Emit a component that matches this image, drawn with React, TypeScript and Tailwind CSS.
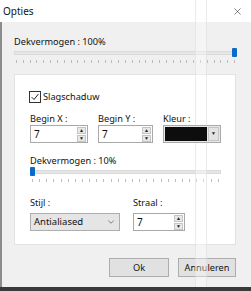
import { ChevronDown, X } from "lucide-react";

const font = { fontFamily: '"Noto Sans", "Open Sans", sans-serif' };

function Ticks({ count }: { count: number }) {
  return (
    <div className="flex justify-between px-[2px] mt-[3px]">
      {Array.from({ length: count }).map((_, i) => (
        <div key={i} className="w-px h-[3px] bg-[#bcbcbc]" />
      ))}
    </div>
  );
}

function Slider({ pos, ticks }: { pos: "start" | "end"; ticks: number }) {
  return (
    <div>
      <div className="relative h-[9px] flex items-center">
        <div className="w-full h-[4px] bg-[#e6e6e6] border border-[#dadada]" />
        <div
          className={`absolute top-0 h-[9px] w-[5px] rounded-[1px] bg-[#0a6cc9] ${
            pos === "end" ? "right-0" : "left-0"
          }`}
        />
      </div>
      <Ticks count={ticks} />
    </div>
  );
}

function Spinner() {
  return (
    <div className="flex flex-col gap-px pr-px py-px">
      <div className="w-[9px] h-[7px] bg-[#e8e8e8] border border-[#c4c4c4] flex items-center justify-center text-[5px] leading-none text-[#222]">
        ▲
      </div>
      <div className="w-[9px] h-[7px] bg-[#e8e8e8] border border-[#c4c4c4] flex items-center justify-center text-[5px] leading-none text-[#222]">
        ▼
      </div>
    </div>
  );
}

function SpinInput({ w }: { w: string }) {
  return (
    <div className={`${w} h-[18px] bg-white border border-[#a9a9a9] flex items-center justify-between`}>
      <span className="pl-[3px] text-[10px] leading-none">7</span>
      <Spinner />
    </div>
  );
}

export default function App() {
  return (
    <div
      className="relative w-[251px] h-[291px] bg-[#f0f0f0] flex flex-col text-[#111] overflow-hidden text-[9.2px]"
      style={font}
    >
      {/* Title bar */}
      <div className="h-[22px] bg-white flex items-center justify-between pl-[3px] pr-[8px] shrink-0">
        <span className="text-[10px] leading-none">Opties</span>
        <X className="w-[11px] h-[11px] text-[#333]" strokeWidth={1.3} />
      </div>

      <div className="flex-1 flex flex-col border-l-2 border-[#8c8c8c] pl-[12px] pr-[15px] pt-[14px]">
        <div className="leading-[12px]">Dekvermogen : 100%</div>
        <div className="-mr-px">
          <Slider pos="end" ticks={33} />
        </div>

        {/* Group panel */}
        <div className="mt-[11px] h-[171px] bg-white border border-[#e2e2e2] px-[15px] pt-[16px]">
          <div className="flex items-center gap-[2px] h-[12px]">
            <div className="w-[12px] h-[12px] border border-[#333] flex items-center justify-center -ml-px">
              <svg viewBox="0 0 12 12" className="w-[10px] h-[10px]">
                <path d="M2 6.2 L4.8 9 L10 2.6" fill="none" stroke="#222" strokeWidth="1.2" />
              </svg>
            </div>
            <span className="leading-[12px]">Slagschaduw</span>
          </div>

          <div className="flex gap-[10px] mt-[10px]">
            <div className="flex flex-col">
              <span className="leading-[12px]">Begin X :</span>
              <SpinInput w="w-[58px]" />
            </div>
            <div className="flex flex-col">
              <span className="leading-[12px]">Begin Y :</span>
              <SpinInput w="w-[55px]" />
            </div>
            <div className="flex flex-col relative z-10">
              <span className="leading-[12px]">Kleur :</span>
              <div className="flex items-center gap-[1px] h-[18px] border border-[#a9a9a9] bg-[#e8e8e8] w-[58px] p-[1px]">
                <div className="flex-1 h-full bg-[#0d0d0d]" />
                <div className="w-[11px] h-full bg-[#e3e3e3] border border-[#c4c4c4] flex items-center justify-center text-[5px] text-[#222]">
                  ▼
                </div>
              </div>
            </div>
          </div>

          <div className="leading-[12px] mt-[12px]">Dekvermogen : 10%</div>
          <div className="w-[191px]">
            <Slider pos="start" ticks={27} />
          </div>

          <div className="flex gap-[13px] mt-[15px]">
            <div className="flex flex-col">
              <span className="leading-[12px]">Stijl :</span>
              <div className="mt-[4px] w-[90px] h-[18px] bg-[#e5e5e5] border border-[#adadad] flex items-center justify-between pl-[3px] pr-[3px]">
                <span className="text-[9.5px] leading-none">Antialiased</span>
                <ChevronDown className="w-[10px] h-[10px] text-[#444]" strokeWidth={1.5} />
              </div>
            </div>
            <div className="flex flex-col">
              <span className="leading-[12px]">Straal :</span>
              <div className="mt-[4px]">
                <SpinInput w="w-[52px]" />
              </div>
            </div>
          </div>
        </div>

        {/* Buttons */}
        <div className="flex justify-end gap-[9px] mt-[13px]">
          <button className="w-[60px] h-[19px] bg-[#e1e1e1] border border-[#adadad] leading-none">
            Ok
          </button>
          <button className="w-[58px] h-[19px] bg-[#e1e1e1] border border-[#adadad] leading-none">
            Annuleren
          </button>
        </div>
      </div>

      <div className="h-[4px] bg-[#3a3a3a] shrink-0" />

      {/* background window bleed-through stripe */}
      <div className="absolute top-0 bottom-[4px] left-[195px] w-[12px] bg-white/35 border-x border-[#d8d8d8]/50 pointer-events-none" />
    </div>
  );
}
